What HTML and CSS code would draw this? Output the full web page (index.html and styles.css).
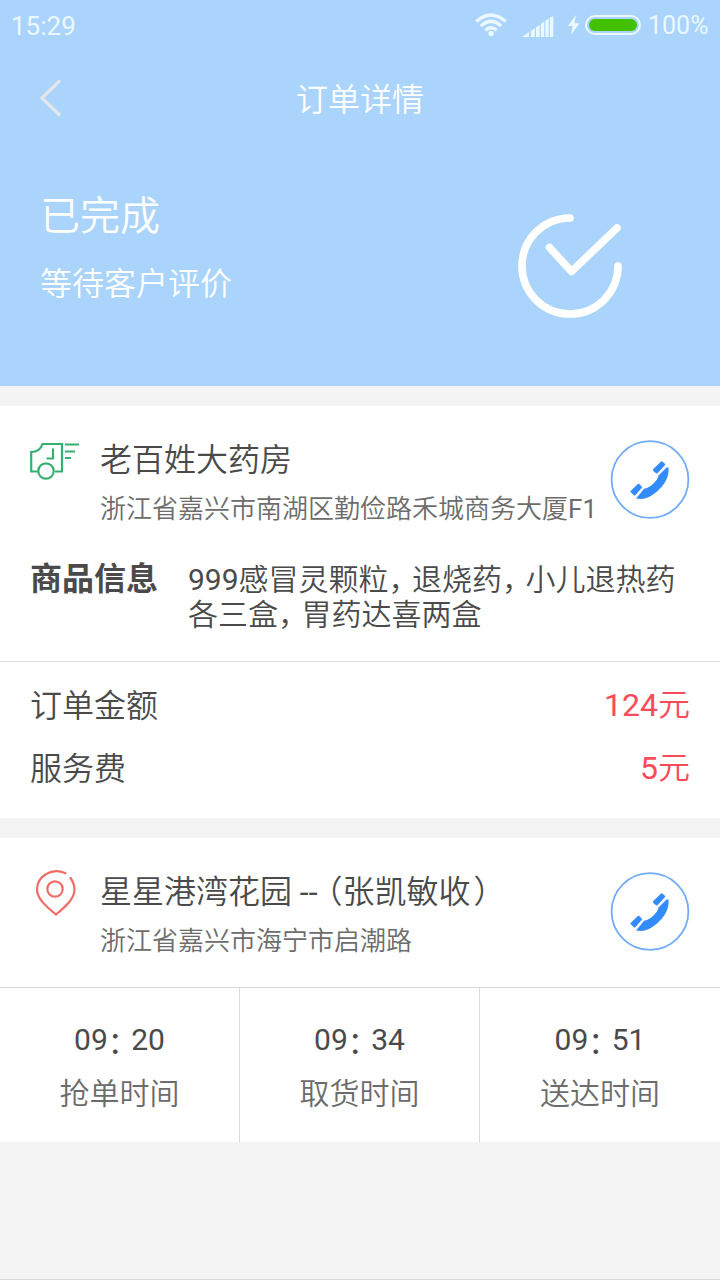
FILE: index.html
```html
<!DOCTYPE html>
<html lang="zh-CN">
<head>
<meta charset="utf-8">
<title>订单详情</title>
<link rel="stylesheet" href="styles.css">
</head>
<body>
<div class="page">
  <header class="hero">
    <div class="statusbar">
      <span class="clock">15:29</span>
      <svg class="wifi" width="32" height="24" viewBox="0 0 32 24" fill="none" stroke="#eaf8ff" stroke-width="3.400"><path d="M1.200 8.600Q16-4.600 30.800 8.600M5.800 13Q16 3.800 26.200 13M10.300 17.200Q16 12.400 21.700 17.200"/><circle cx="16" cy="20.500" r="2.700" fill="#eaf8ff" stroke="none"/></svg>
      <svg class="signal" width="32" height="21" viewBox="0 0 32 21" fill="#eaf8ff"><path d="M0 21L7 16V21ZM8.800 15L12.800 12.200V21H8.800ZM14 11.400L17.600 8.800V21H14ZM18.800 8.100L22.200 5.600V21H18.800ZM23.300 4.800L26.700 2.500V21H23.300ZM27.800 1.700L31.300 0V21H27.800Z"/></svg>
      <svg class="bolt" width="12" height="20" viewBox="0 0 12 20" fill="#eaf8ff"><path d="M7.800 0L0 11H4.600L3 20L11.500 8.200H6.600Z"/></svg>
      <span class="battery"><span class="charge"></span></span>
      <span class="percent">100%</span>
    </div>
    <nav class="navbar">
      <svg class="back" width="24" height="40" viewBox="0 0 24 40" fill="none" stroke="#e2e6ea" stroke-width="3.400" stroke-linecap="round" stroke-linejoin="round"><path d="M21 3.500L4 20L21 36.500"/></svg>
      <h1 class="title">订单详情</h1>
    </nav>
    <div class="state">
      <div class="state-text">
        <p class="state-name">已完成</p>
        <p class="state-note">等待客户评价</p>
      </div>
      <svg class="check" width="108" height="108" viewBox="0 0 108 108" fill="none" stroke="#fff" stroke-width="7.600" stroke-linecap="round" stroke-linejoin="round"><path d="M54 6A48 48 0 1 0 102 54M33.500 35.500L55.500 59.500L101 16"/></svg>
    </div>
  </header>

  <section class="card shop">
    <div class="contact">
      <svg class="icon" width="50" height="40" viewBox="0 0 50 40" fill="none" stroke="#36b070" stroke-width="2.200"><path d="M8 31.500H1.200V12Q10 12 12.500 4H32V31.500H25M23 8.500V18.500H16.500M35 4.500H49M35 11.500H45M35 18H41"/><circle cx="16" cy="31" r="7.700"/></svg>
      <div class="place">
        <h2 class="name">老百姓大药房</h2>
        <p class="address">浙江省嘉兴市南湖区勤俭路禾城商务大厦<span class="latin">F1</span></p>
      </div>
      <svg class="call" width="80" height="80" viewBox="0 0 80 80"><circle cx="40" cy="39.500" r="38.400" fill="none" stroke="#73acf4" stroke-width="1.800"/><path fill="#338cff" d="M56.500 27.500L58.500 27.500C59.500 36 55 45 46.700 51.700C40 57 35 60 26 58.500L34.300 48.500C40 48.500 48 40 48.500 35.500Z"/><path fill="#338cff" stroke="#338cff" stroke-width="2" stroke-linejoin="round" d="M21.500 51.500L28.500 44.700L31 47.300L24.500 54.500ZM43.800 30L51.700 22.200L54.200 24.500L46.700 32.500Z"/></svg>
    </div>
    <div class="goods">
      <span class="goods-label">商品信息</span>
      <p class="goods-text"><span class="latin">999</span>感冒灵颗粒<span class="comma">，</span>退烧药<span class="comma">，</span>小儿退热药<br>各三盒<span class="comma">，</span>胃药达喜两盒</p>
    </div>
    <dl class="fees">
      <div class="fee"><dt>订单金额</dt><dd><span class="latin">124</span>元</dd></div>
      <div class="fee"><dt>服务费</dt><dd><span class="latin">5</span>元</dd></div>
    </dl>
  </section>

  <section class="card customer">
    <div class="contact">
      <svg class="icon" width="50" height="50" viewBox="0 0 50 50" fill="none" stroke="#f26c66" stroke-width="2.200" stroke-linecap="round"><path d="M35.500 4.200C22 -2 7 7 7 20.500C7 30 17 38 26 45.500C35 38 44.500 30 44.500 20.500C44.500 16 43 12.500 40.500 9"/><circle cx="25" cy="20" r="7.700"/></svg>
      <div class="place">
        <h2 class="name">星星港湾花园 <span class="latin">--</span><span class="paren-open">（</span>张凯敏收<span class="paren-close">）</span></h2>
        <p class="address">浙江省嘉兴市海宁市启潮路</p>
      </div>
      <svg class="call" width="80" height="80" viewBox="0 0 80 80"><circle cx="40" cy="39.500" r="38.400" fill="none" stroke="#73acf4" stroke-width="1.800"/><path fill="#338cff" d="M56.500 27.500L58.500 27.500C59.500 36 55 45 46.700 51.700C40 57 35 60 26 58.500L34.300 48.500C40 48.500 48 40 48.500 35.500Z"/><path fill="#338cff" stroke="#338cff" stroke-width="2" stroke-linejoin="round" d="M21.500 51.500L28.500 44.700L31 47.300L24.500 54.500ZM43.800 30L51.700 22.200L54.200 24.500L46.700 32.500Z"/></svg>
    </div>
    <div class="times">
      <div class="time"><span class="hour">09<span class="colon">：</span>20</span><span class="time-label">抢单时间</span></div>
      <div class="time"><span class="hour">09<span class="colon">：</span>34</span><span class="time-label">取货时间</span></div>
      <div class="time"><span class="hour">09<span class="colon">：</span>51</span><span class="time-label">送达时间</span></div>
    </div>
  </section>
</div>
</body>
</html>
```
FILE: styles.css
```css
* { box-sizing: border-box; margin: 0; padding: 0; }
body {
  background: #f4f4f4;
  color: #4a4a4a;
  font-family: Roboto, "Noto Sans CJK SC", sans-serif;
  font-weight: 350;
}
svg { display: block; flex: none; }
.latin { font-weight: 400; }
.page {
  height: 1280px;
  display: flex;
  flex-direction: column;
  gap: 20px;
  border-bottom: 1px solid #d8d8d8;
  overflow: hidden;
}
.hero { height: 386px; background: #aad4fb; color: #fff; }
.statusbar {
  height: 50px;
  display: flex;
  align-items: center;
  padding: 0 12px 0 11px;
  color: #eaf8ff;
  font-size: 26px;
  font-weight: 400;
}
.clock { flex: 1; line-height: 50px; padding-top: 2px; }
.wifi { margin-right: 15px; }
.signal { margin: 2px 14px 0 0; }
.bolt { margin-right: 5px; }
.battery {
  width: 56px;
  height: 20px;
  padding: 2px;
  border: 2px solid #eaf8ff;
  border-radius: 10px;
  margin-right: 7px;
}
.charge { display: block; height: 12px; border-radius: 6px; background: #43c000; }
.percent { width: 60px; font-size: 25px; padding-top: 1px; white-space: nowrap; }
.navbar { height: 96px; padding: 0 38px; display: flex; align-items: center; }
.title { flex: 1; padding: 4px 24px 0 0; text-align: center; font-size: 32px; font-weight: 350; line-height: 48px; }
.state { display: flex; justify-content: space-between; padding: 40px 96px 0 40px; }
.state-name { font-size: 40px; line-height: 60px; padding-top: 1px; }
.state-note { font-size: 32px; line-height: 48px; margin-top: 13px; }
.check { margin-top: 26px; }
.card { background: #fff; }
.shop { height: 412px; }
.customer { height: 304px; }
.contact { display: flex; padding: 34px 30px 0 30px; height: 149px; }
.shop .contact { height: 145px; }
.place { flex: 1; padding-left: 20px; white-space: nowrap; }
.name { font-size: 32px; line-height: 40px; font-weight: 350; }
.address { font-size: 26px; line-height: 36px; margin-top: 11px; color: #6c6c6c; }
.call { margin-left: -10px; }
.customer .icon { margin-top: -3px; }
.goods { display: flex; height: 111px; padding-left: 30px; border-bottom: 1px solid #d9d9d9; }
.goods-label { width: 158px; font-size: 32px; font-weight: 700; line-height: 56px; }
.goods-text { font-size: 30px; line-height: 35px; padding-top: 11px; white-space: nowrap; }
.comma { letter-spacing: -6.500px; }
.fees { padding: 12px 30px 0; font-size: 32px; line-height: 63px; }
.fee { display: flex; justify-content: space-between; }
.fee dt { padding-top: 1px; margin-bottom: -1px; }
.fee dd { color: #f94b5a; }
.paren-open, .paren-close { font-feature-settings: "halt"; }
.paren-open { padding-left: 9px; }
.paren-close { padding-left: 3px; }
.times { display: grid; grid-template-columns: repeat(3, 240px); height: 155px; border-top: 1px solid #d9d9d9; }
.time { display: flex; flex-direction: column; align-items: center; padding-top: 31px; border-right: 1px solid #d9d9d9; }
.time:last-child { border-right: 0; }
.hour { font-size: 30px; line-height: 42px; font-weight: 400; }
.colon { display: inline-block; line-height: 30px; letter-spacing: -6.500px; vertical-align: -3px; }
.time-label { font-size: 30px; line-height: 44px; margin-top: 11px; color: #6c6c6c; }
```
